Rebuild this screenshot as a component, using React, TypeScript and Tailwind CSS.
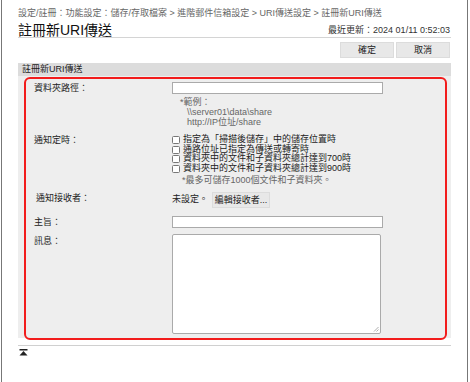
import React from 'react';

const checkboxItems = [
  '指定為「掃描後儲存」中的儲存位置時',
  '通路位址已指定為傳送或轉寄時',
  '資料夾中的文件和子資料夾總計達到700時',
  '資料夾中的文件和子資料夾總計達到900時',
];

const TopIcon = () => (
  <svg width="9" height="7" viewBox="0 0 9 7" className="block">
    <rect x="0.5" y="0" width="8" height="1.5" fill="#222" />
    <path d="M4.5 2 L8.5 6.5 L0.5 6.5 Z" fill="#222" />
  </svg>
);

const Checkbox = ({ label }: { label: string }) => (
  <label className="flex items-center h-[9.7px] gap-[3px]">
    <span className="w-[8px] h-[8px] bg-white border border-[#777] rounded-[1.5px] shrink-0" />
    <span className="leading-[9.7px] whitespace-nowrap">{label}</span>
  </label>
);

const TextBox = () => <div className="w-[211px] h-[12px] bg-white border border-[#aaa]" />;

export default function App() {
  return (
    <div
      className="w-[470px] h-[382px] bg-white text-[9px] text-[#222] overflow-hidden"
      style={{ fontFamily: '"Liberation Sans", "Noto Sans CJK TC", sans-serif' }}
    >
      <div className="ml-[1px] w-[467px] h-full border-l border-r border-[#777] px-[16px]">
        {/* breadcrumb */}
        <div className="pt-[8px] h-[19px] leading-[11px] text-[#666] whitespace-nowrap">
          設定/註冊：功能設定：儲存/存取檔案 &gt; 進階郵件信箱設定 &gt; URI傳送設定 &gt; 註冊新URI傳送
        </div>

        {/* title row */}
        <div className="mt-[4px] h-[15px] flex items-end justify-between border-b border-[#d4d4d4]">
          <h1 className="text-[14px] leading-[14px] text-[#111]">註冊新URI傳送</h1>
          <span className="leading-[13px] pr-[1px] text-[#333]">最近更新：2024 01/11 0:52:03</span>
        </div>

        {/* action buttons */}
        <div className="mt-[4px] h-[16px] flex justify-end gap-[2px] pr-[1px]">
          <button className="w-[54px] h-[16px] bg-[#e8e8e8] border border-[#dcdcdc] leading-[14px] text-[#222]">
            確定
          </button>
          <button className="w-[54px] h-[16px] bg-[#e8e8e8] border border-[#dcdcdc] leading-[14px] text-[#222]">
            取消
          </button>
        </div>

        {/* section header */}
        <div className="mt-[5px] h-[13px] bg-[#dcdcdc] pl-[4px] leading-[13px] text-[#222]">註冊新URI傳送</div>

        {/* form area */}
        <div className="bg-[#eeeeee] pl-[6px] pr-[4px] pt-[1px] h-[262px]">
          <div className="border-2 border-[#f21c1c] rounded-[6px] pl-[8px] pt-[3px] pb-[3px] h-[263px]">
            {/* folder path */}
            <div className="flex">
              <div className="w-[138px] leading-[12px]">資料夾路徑：</div>
              <div>
                <TextBox />
                <div className="mt-[3px] pl-[8px] leading-[10px] text-[#666]">*範例：</div>
                <div className="pl-[15px] leading-[10px] text-[#666]">\\server01\data\share</div>
                <div className="pl-[15px] leading-[10px] text-[#666]">http://IP位址/share</div>
              </div>
            </div>

            {/* notify timing */}
            <div className="flex mt-[8px]">
              <div className="w-[138px] leading-[10px]">通知定時：</div>
              <div>
                {checkboxItems.map(item => (
                  <Checkbox key={item} label={item} />
                ))}
                <div className="mt-[1px] pl-[10px] leading-[10px] text-[#666]">*最多可儲存1000個文件和子資料夾。</div>
              </div>
            </div>

            {/* recipient */}
            <div className="flex items-center mt-[7px]">
              <div className="w-[138px] pl-[2px] leading-[10px] -mt-[4px]">通知接收者：</div>
              <div className="flex items-center">
                <span className="mr-[4px]">未設定。</span>
                <button className="w-[58px] h-[16px] bg-[#e8e8e8] border border-[#dcdcdc] leading-[14px] text-[#222]">
                  編輯接收者...
                </button>
              </div>
            </div>

            {/* subject */}
            <div className="flex items-center mt-[8px]">
              <div className="w-[138px] leading-[12px]">主旨：</div>
              <TextBox />
            </div>

            {/* message */}
            <div className="flex mt-[6px]">
              <div className="w-[138px] pt-[2px] leading-[10px]">訊息：</div>
              <div className="relative w-[209px] h-[100px] bg-white border border-[#aaa] rounded-[2px]">
                <svg width="6" height="6" viewBox="0 0 6 6" className="absolute right-[1px] bottom-[1px]">
                  <path d="M5.5 1 L1 5.5 M5.5 3.5 L3.5 5.5" stroke="#999" strokeWidth="0.8" />
                </svg>
              </div>
            </div>
          </div>
        </div>

        {/* footer */}
        <div className="mt-[7px] border-t border-[#d0d0d0] pt-[3px] pl-[1px]">
          <TopIcon />
        </div>
      </div>
    </div>
  );
}
